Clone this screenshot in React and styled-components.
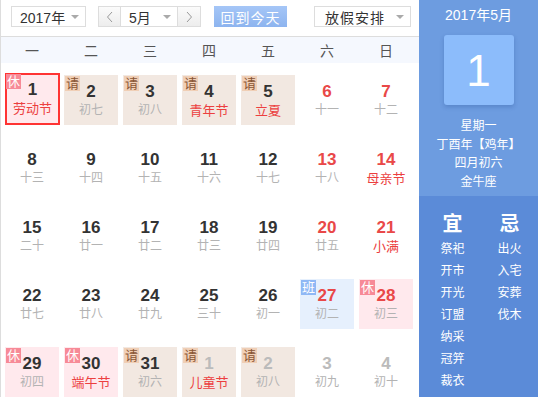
import React from 'react';
import styled, { createGlobalStyle } from 'styled-components';

const GlobalStyle = createGlobalStyle`
  html, body {
    margin: 0;
    padding: 0;
    background: #fff;
  }
  body {
    font-family: "Liberation Sans", "Noto Sans CJK SC", sans-serif;
  }
  * {
    box-sizing: border-box;
  }
`;

const Wrap = styled.div`
  width: 538px;
  height: 397px;
  display: flex;
  overflow: hidden;
`;

const Main = styled.div`
  width: 419px;
  height: 100%;
  border-left: 1px solid #ddd;
  display: flex;
  flex-direction: column;
`;

const Toolbar = styled.div`
  height: 38px;
  border-bottom: 1px solid #ddd;
  display: flex;
  align-items: flex-start;
  padding: 6px 0 0 10px;
`;

const Select = styled.div`
  width: ${(p) => p.w}px;
  height: 21px;
  margin-left: ${(p) => p.ml || 0}px;
  border: 1px solid #ddd;
  background: #fff;
  display: flex;
  align-items: center;
  padding-left: ${(p) => p.pl || 8}px;
  position: relative;
  font-size: 14px;
  color: #333;
  letter-spacing: ${(p) => p.ls || 0}px;
`;

const Caret = styled.span`
  position: absolute;
  right: 6px;
  top: 8px;
  width: 0;
  height: 0;
  border-left: 4px solid transparent;
  border-right: 4px solid transparent;
  border-top: 4px solid #aaa;
`;

const MonthGroup = styled.div`
  display: flex;
  margin-left: 12px;
  height: 21px;
`;

const Arrow = styled.div`
  width: ${(p) => p.w}px;
  height: 21px;
  border: 1px solid #ddd;
  border-left: ${(p) => (p.side === 'right' ? 'none' : '1px solid #ddd')};
  border-right: ${(p) => (p.side === 'left' ? 'none' : '1px solid #ddd')};
  background: linear-gradient(#fbfbfb, #ededed);
  display: flex;
  align-items: center;
  justify-content: center;
`;

const TodayButton = styled.div`
  margin-left: 13px;
  width: 73px;
  height: 21px;
  background: linear-gradient(#a5c6f7, #8db4ef);
  color: #fff;
  font-size: 14px;
  display: flex;
  align-items: center;
  justify-content: center;
  letter-spacing: 1px;
`;

const WeekHeader = styled.div`
  height: 27px;
  background: #f5f8fe;
  display: grid;
  grid-template-columns: repeat(7, 54px);
  column-gap: 5px;
  padding: 0 0 0 4px;
  align-items: center;
`;

const WeekDay = styled.div`
  text-align: center;
  font-size: 14px;
  color: #555;
`;

const Grid = styled.div`
  display: grid;
  grid-template-columns: repeat(7, 54px);
  grid-auto-rows: 50px;
  column-gap: 5px;
  row-gap: 18px;
  padding: 12px 0 0 4px;
`;

const cellBg = {
  xiu: '#ffe9ed',
  qing: '#f2e8e1',
  ban: '#e6f0fd',
};

const Cell = styled.div`
  position: relative;
  background: ${(p) => (p.kind ? cellBg[p.kind] : 'transparent')};
  border: ${(p) => (p.today ? '2px solid #f33' : 'none')};
  margin: ${(p) => (p.today ? '-2px 0 0 0' : '0')};
  height: ${(p) => (p.today ? '52px' : '50px')};
  width: ${(p) => (p.today ? '55px' : '54px')};
  display: flex;
  flex-direction: column;
  align-items: center;
  padding-top: ${(p) => (p.today ? '5px' : '7px')};
`;

const badgeStyle = {
  xiu: { bg: '#f78a97', color: '#fff' },
  qing: { bg: '#f0cfb6', color: '#8a5534' },
  ban: { bg: '#8fb8f5', color: '#fff' },
};

const Badge = styled.span`
  position: absolute;
  left: ${(p) => (p.today ? '-1px' : '1px')};
  top: ${(p) => (p.today ? '-1px' : '1px')};
  width: 15px;
  height: 15px;
  line-height: 15px;
  font-size: 13px;
  text-align: center;
  background: ${(p) => badgeStyle[p.kind].bg};
  color: ${(p) => badgeStyle[p.kind].color};
`;

const DayNum = styled.div`
  font-size: 17px;
  font-weight: bold;
  line-height: 19px;
  color: ${(p) => (p.other ? '#bbb' : p.red ? '#e94848' : '#333')};
`;

const Lunar = styled.div`
  font-size: ${(p) => (p.fest ? 13 : 12)}px;
  line-height: 19px;
  color: ${(p) => (p.fest ? '#ec3f3f' : '#b3b3b3')};
`;

const Panel = styled.div`
  width: 119px;
  height: 100%;
  background: #6d9ce0;
  display: flex;
  flex-direction: column;
  align-items: center;
  color: #fff;
`;

const PanelTitle = styled.div`
  margin-top: 5px;
  font-size: 14px;
  line-height: 20px;
`;

const BigDay = styled.div`
  margin-top: 10px;
  width: 70px;
  height: 70px;
  background: #8cbcfb;
  border-radius: 3px;
  box-shadow: 0 2px 4px rgba(40, 80, 150, 0.3);
  display: flex;
  align-items: center;
  justify-content: center;
  font-size: 44px;
  padding-top: 2px;
`;

const Info = styled.div`
  margin-top: 12px;
  font-size: 12px;
  line-height: 18.5px;
  text-align: center;
  height: 79px;
`;

const YiJi = styled.div`
  flex: 1;
  width: 100%;
  background: #5b8bd8;
  display: flex;
  padding: 17px 0 0 5px;
`;

const YiJiCol = styled.div`
  width: 60px;
  display: flex;
  flex-direction: column;
  align-items: center;
`;

const YiJiHead = styled.div`
  font-size: 20px;
  font-weight: bold;
  line-height: 22px;
  margin-bottom: 3px;
`;

const YiJiItem = styled.div`
  font-size: 12px;
  line-height: 22px;
`;

const Chevron = ({ dir }) => (
  <svg width="8" height="12" viewBox="0 0 8 12">
    <polyline
      points={dir === 'left' ? '6,1 1.5,6 6,11' : '2,1 6.5,6 2,11'}
      fill="none"
      stroke="#999"
      strokeWidth="1"
    />
  </svg>
);

const weekDays = ['一', '二', '三', '四', '五', '六', '日'];

const days = [
  { n: 1, l: '劳动节', f: true, k: 'xiu', today: true },
  { n: 2, l: '初七', k: 'qing' },
  { n: 3, l: '初八', k: 'qing' },
  { n: 4, l: '青年节', f: true, k: 'qing' },
  { n: 5, l: '立夏', f: true, k: 'qing' },
  { n: 6, l: '十一', r: true },
  { n: 7, l: '十二', r: true },
  { n: 8, l: '十三' },
  { n: 9, l: '十四' },
  { n: 10, l: '十五' },
  { n: 11, l: '十六' },
  { n: 12, l: '十七' },
  { n: 13, l: '十八', r: true },
  { n: 14, l: '母亲节', r: true, f: true },
  { n: 15, l: '二十' },
  { n: 16, l: '廿一' },
  { n: 17, l: '廿二' },
  { n: 18, l: '廿三' },
  { n: 19, l: '廿四' },
  { n: 20, l: '廿五', r: true },
  { n: 21, l: '小满', r: true, f: true },
  { n: 22, l: '廿七' },
  { n: 23, l: '廿八' },
  { n: 24, l: '廿九' },
  { n: 25, l: '三十' },
  { n: 26, l: '初一' },
  { n: 27, l: '初二', r: true, k: 'ban' },
  { n: 28, l: '初三', r: true, k: 'xiu' },
  { n: 29, l: '初四', k: 'xiu' },
  { n: 30, l: '端午节', f: true, k: 'xiu' },
  { n: 31, l: '初六', k: 'qing' },
  { n: 1, l: '儿童节', f: true, k: 'qing', o: true },
  { n: 2, l: '初八', k: 'qing', o: true },
  { n: 3, l: '初九', o: true },
  { n: 4, l: '初十', o: true },
];

const badgeText = { xiu: '休', qing: '请', ban: '班' };

const yi = ['祭祀', '开市', '开光', '订盟', '纳采', '冠笄', '裁衣'];
const ji = ['出火', '入宅', '安葬', '伐木'];

export default function App() {
  return (
    <>
      <GlobalStyle />
      <Wrap>
        <Main>
          <Toolbar>
            <Select w={75} pl={8}>
              2017年
              <Caret />
            </Select>
            <MonthGroup>
              <Arrow w={22} side="left">
                <Chevron dir="left" />
              </Arrow>
              <Select w={58} pl={8}>
                5月
                <Caret />
              </Select>
              <Arrow w={23} side="right">
                <Chevron dir="right" />
              </Arrow>
            </MonthGroup>
            <TodayButton>回到今天</TodayButton>
            <Select w={97} ml={27} pl={10} ls={1}>
              放假安排
              <Caret />
            </Select>
          </Toolbar>
          <WeekHeader>
            {weekDays.map((d) => (
              <WeekDay key={d}>{d}</WeekDay>
            ))}
          </WeekHeader>
          <Grid>
            {days.map((d, i) => (
              <Cell key={i} kind={d.k} today={d.today}>
                {d.k && (
                  <Badge kind={d.k} today={d.today}>
                    {badgeText[d.k]}
                  </Badge>
                )}
                <DayNum red={d.r} other={d.o}>
                  {d.n}
                </DayNum>
                <Lunar fest={d.f}>{d.l}</Lunar>
              </Cell>
            ))}
          </Grid>
        </Main>
        <Panel>
          <PanelTitle>2017年5月</PanelTitle>
          <BigDay>1</BigDay>
          <Info>
            <div>星期一</div>
            <div>丁酉年【鸡年】</div>
            <div>四月初六</div>
            <div>金牛座</div>
          </Info>
          <YiJi>
            <YiJiCol>
              <YiJiHead>宜</YiJiHead>
              {yi.map((t) => (
                <YiJiItem key={t}>{t}</YiJiItem>
              ))}
            </YiJiCol>
            <YiJiCol>
              <YiJiHead>忌</YiJiHead>
              {ji.map((t) => (
                <YiJiItem key={t}>{t}</YiJiItem>
              ))}
            </YiJiCol>
          </YiJi>
        </Panel>
      </Wrap>
    </>
  );
}
